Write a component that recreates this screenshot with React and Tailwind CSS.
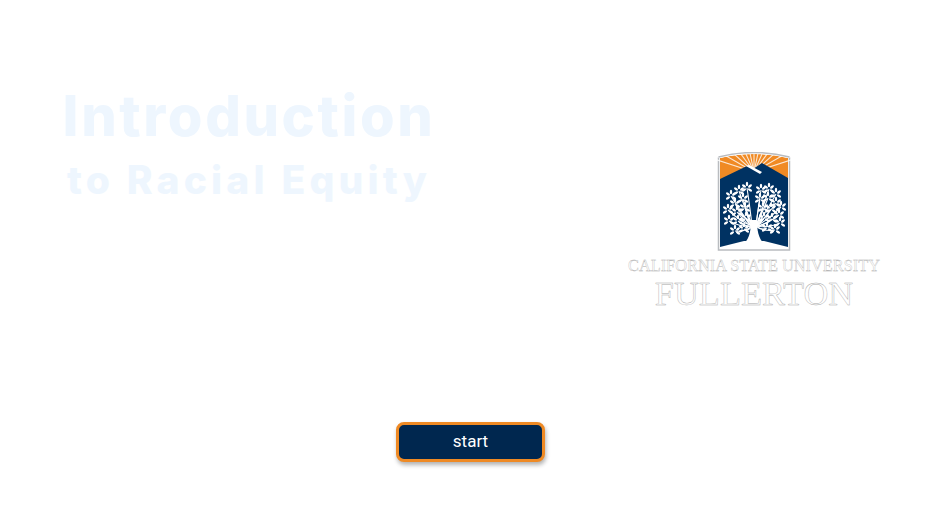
// canopy clusters, the branches run from the trunk out to each of these
const clusters = [
  [731, 196], [739, 191], [747, 188], [735, 204], [743, 199], [728, 210], [737, 212], [745, 208],
  [729, 221], [738, 221], [746, 218], [735, 231], [744, 229],
  [761, 190], [769, 189], [776, 194], [760, 199], [768, 198], [776, 203], [781, 207],
  [763, 208], [771, 209], [779, 215], [764, 218], [772, 219], [780, 223], [767, 228], [775, 230],
];

const leafOffsets = [[-3, -2, 35], [3, -2, 140], [0, -4, 90], [-3, 2, 150], [3, 2, 30]];

const rays = [-72, -60, -48, -36, -24, -12, 0, 12, 24, 36, 48, 60, 72];

function Crest() {
  return (
    <svg width="76" height="100" viewBox="716 152 76 100" aria-hidden="true">
      <path d="M718.5 157 Q754 148 789.5 157 V250 H718.5 Z" fill="#fff" stroke="#b9bcc0" strokeWidth="1.5" />
      <path d="M720 158 Q754 150 788 158 V179 H720 Z" fill="#f08a24" />
      {rays.map((a) => (
        <line
          key={a}
          x1="754"
          y1="172"
          x2={754 + 44 * Math.sin((a * Math.PI) / 180)}
          y2={172 - 44 * Math.cos((a * Math.PI) / 180)}
          stroke="#fff"
          strokeWidth="1.1"
          opacity="0.8"
        />
      ))}
      <path d="M716 148 H792 V157 L788 158 Q754 150 720 158 L716 157 Z" fill="#fff" />
      <path d="M718.5 157 Q754 148 789.5 157" fill="none" stroke="#b9bcc0" strokeWidth="1.5" />
      <path d="M720 179 L747 166 L753 169 L762 163 L788 178 V247 L764 241 H744 L720 247 Z" fill="#003262" />
      <path d="M746 166 L749 165 L762 172 L760 174 Z" fill="#fff" />
      <g fill="none" stroke="#fff" strokeWidth="1.1">
        {clusters.map(([x, y]) => (
          <path key={`${x}-${y}`} d={`M${x < 754 ? 752 : 756} 226 Q${(x + 754) / 2} ${(y + 226) / 2 + 4} ${x} ${y}`} />
        ))}
      </g>
      <path d="M741 246 C749 241 751 232 751 220 H757 C757 232 759 241 767 246 Z" fill="#fff" />
      <g fill="#fff">
        {clusters.map(([x, y]) =>
          leafOffsets.map(([dx, dy, r]) => (
            <ellipse
              key={`${x}-${y}-${dx}-${dy}`}
              cx={x + dx}
              cy={y + dy}
              rx="2.3"
              ry="1.2"
              transform={`rotate(${r} ${x + dx} ${y + dy})`}
            />
          ))
        )}
      </g>
    </svg>
  );
}

export default function App() {
  return (
    <div className="w-[940px] h-[528px] bg-white overflow-hidden flex flex-col font-['Liberation_Sans',sans-serif]">
      <div className="flex items-start h-[422px]">
        <div className="w-[498px] pt-[84px] flex flex-col items-center font-['Inter',sans-serif] text-[#eef6fe]">
          <h1 className="text-[56px] h-[64px] leading-[64px] tracking-[2.6px] font-extrabold">Introduction</h1>
          <h2 className="text-[39px] mt-[10px] tracking-[4.2px] leading-[44px] font-extrabold">to Racial Equity</h2>
        </div>
        <div className="w-[442px] pl-[70px] pt-[152px] flex flex-col items-center">
          <Crest />
          <div className="mt-[5px] font-['Liberation_Serif',serif] text-white text-[16.35px] leading-[18px] whitespace-nowrap [-webkit-text-stroke:0.3px_#a8a8a8]">
            CALIFORNIA STATE UNIVERSITY
          </div>
          <div className="mt-[2px] font-['Liberation_Serif',serif] text-white text-[34.5px] leading-[33px] whitespace-nowrap [-webkit-text-stroke:0.4px_#a8a8a8]">
            FULLERTON
          </div>
        </div>
      </div>
      <div className="flex justify-center">
        <button className="w-[149px] h-[40px] ml-[1px] rounded-[8px] bg-[#00274f] border-[3px] border-[#ef8a24] text-white text-[17px] font-['Roboto',sans-serif] shadow-[1px_3px_4px_rgba(0,0,0,0.3)]">
          start
        </button>
      </div>
    </div>
  );
}
